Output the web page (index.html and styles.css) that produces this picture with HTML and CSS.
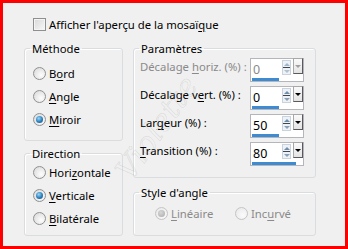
FILE: index.html
```html
<!DOCTYPE html>
<html lang="fr">
<head>
  <meta charset="UTF-8" />
  <title>Mosaïque</title>
  <link rel="stylesheet" href="styles.css">
</head>
<body>

  <div class="dialog">

    <!-- Aperçu -->
    <div class="check-row">
      <span class="checkbox"></span>
      <span>Afficher l'aperçu de la mosaï<u>q</u>ue</span>
    </div>

    <div class="columns">

      <!-- Colonne gauche -->
      <div class="col">
        <fieldset class="group method">
          <legend>Méthode</legend>
          <div class="radio"><span class="dot"></span><span>B<u>o</u>rd</span></div>
          <div class="radio"><span class="dot"></span><span><u>A</u>ngle</span></div>
          <div class="radio"><span class="dot on"></span><span><u>M</u>iroir</span></div>
        </fieldset>

        <fieldset class="group direction">
          <legend>Direction</legend>
          <div class="radio"><span class="dot"></span><span>Hori<u>z</u>ontale</span></div>
          <div class="radio"><span class="dot on"></span><span><u>V</u>erticale</span></div>
          <div class="radio"><span class="dot"></span><span><u>B</u>ilatérale</span></div>
        </fieldset>
      </div>

      <!-- Colonne droite -->
      <div class="col">
        <fieldset class="group params">
          <legend>Paramètres</legend>

          <div class="param disabled">
            <span class="param-label">Décalage <u>h</u>oriz. (%) :</span>
            <div class="spin">
              <div class="spin-top">
                <span class="spin-value">0</span>
                <span class="spin-arrows"><i class="up"></i><i class="down"></i></span>
                <span class="spin-drop"></span>
              </div>
              <div class="spin-bar" style="width:27px"></div>
            </div>
          </div>

          <div class="param">
            <span class="param-label">Décalage v<u>e</u>rt. (%) :</span>
            <div class="spin">
              <div class="spin-top">
                <span class="spin-value">0</span>
                <span class="spin-arrows"><i class="up"></i><i class="down"></i></span>
                <span class="spin-drop"></span>
              </div>
              <div class="spin-bar" style="width:27px"></div>
            </div>
          </div>

          <div class="param">
            <span class="param-label">Lar<u>g</u>eur (%) :</span>
            <div class="spin">
              <div class="spin-top">
                <span class="spin-value">50</span>
                <span class="spin-arrows"><i class="up"></i><i class="down"></i></span>
                <span class="spin-drop"></span>
              </div>
              <div class="spin-bar" style="width:27px"></div>
            </div>
          </div>

          <div class="param">
            <span class="param-label"><u>T</u>ransition (%) :</span>
            <div class="spin">
              <div class="spin-top">
                <span class="spin-value">80</span>
                <span class="spin-arrows"><i class="up"></i><i class="down"></i></span>
                <span class="spin-drop"></span>
              </div>
              <div class="spin-bar" style="width:44px"></div>
            </div>
          </div>
        </fieldset>

        <fieldset class="group angle">
          <legend>Style d'angle</legend>
          <div class="angle-row">
            <div class="radio disabled"><span class="dot on"></span><span><u>L</u>inéaire</span></div>
            <div class="radio disabled"><span class="dot"></span><span>Inc<u>u</u>rvé</span></div>
          </div>
        </fieldset>
      </div>

    </div>

    <div class="watermark">Violette</div>
  </div>

</body>
</html>
```

FILE: styles.css
```css
* {
  box-sizing: border-box;
}

body {
  margin: 0;
  font-family: "Noto Sans", sans-serif;
  font-size: 11.3px;
  line-height: 15px;
  color: #000;
}

u {
  text-decoration-thickness: 1px;
  text-underline-offset: 2px;
}

.dialog {
  position: relative;
  width: 348px;
  height: 249px;
  background: #f0f0f0;
  border: 3px solid #f00;
  padding: 15px 29px 0 21px;
  overflow: hidden;
}

/* case à cocher */
.check-row {
  display: flex;
  align-items: center;
  gap: 3px;
  height: 13px;
  margin-left: 9px;
}

.checkbox {
  width: 13px;
  height: 13px;
  border: 1px solid #8e8f8f;
  background: linear-gradient(135deg, #d8d8d8, #f8f8f8);
  box-shadow: inset 0 0 0 1px #f4f4f4;
}

.columns {
  display: grid;
  grid-template-columns: 99px 183px;
  column-gap: 10px;
  margin-top: 10px;
}

.col {
  display: flex;
  flex-direction: column;
}

/* group boxes */
.group {
  margin: 0;
  padding: 0;
  min-width: 0;
  border: 1px solid #d9dde0;
  border-radius: 3px;
  box-shadow: inset 1px 1px 0 #fff;
}

.group legend {
  padding: 0 2px;
  margin-left: 5px;
}

.method {
  height: 100px;
  padding-top: 6px;
}

.direction {
  height: 90px;
  margin-top: 5px;
}

.method .radio,
.direction .radio {
  margin-left: 8px;
}

.params {
  height: 137px;
  padding-top: 2px;
  display: flex;
  flex-direction: column;
  gap: 4px;
}

.angle {
  height: 51px;
  margin-top: 7px;
  padding-top: 2px;
}

/* boutons radio */
.radio {
  display: flex;
  align-items: center;
  gap: 3px;
  height: 23px;
}

.dot {
  position: relative;
  width: 13px;
  height: 13px;
  border-radius: 50%;
  border: 1px solid #8f9091;
  background: radial-gradient(circle at 65% 65%, #fdfdfd, #d6d6d6);
}

.dot.on::after {
  content: "";
  position: absolute;
  left: 2px;
  top: 2px;
  width: 7px;
  height: 7px;
  border-radius: 50%;
  background: radial-gradient(circle at 40% 35%, #9ad8f7, #2a7dbb 55%, #114a78);
}

.radio.disabled {
  color: #8a8a8a;
}

.radio.disabled .dot {
  border-color: #c4c4c4;
  background: radial-gradient(circle at 65% 65%, #fbfbfb, #e6e6e6);
}

.radio.disabled .dot.on::after {
  background: radial-gradient(circle at 40% 35%, #d8d8d8, #a8a8a8);
}

.angle-row {
  display: flex;
  padding-left: 21px;
}

.angle-row .radio {
  width: 82px;
}

/* champs numériques */
.param {
  display: flex;
  align-items: flex-start;
  height: 24px;
  margin-left: 6px;
}

.param-label {
  width: 110px;
  margin-top: 1px;
  white-space: nowrap;
}

.param.disabled .param-label,
.param.disabled .spin-value {
  color: #8a8a8a;
}

.spin {
  width: 54px;
  height: 24px;
  background: #fff;
  border: 1px solid #b4b6bb;
  display: flex;
  flex-direction: column;
  justify-content: space-between;
}

.spin-top {
  display: flex;
  height: 16px;
}

.spin-value {
  width: 31px;
  padding: 3px 0 0 2px;
  font-size: 12.5px;
  line-height: 16px;
}

.spin-arrows {
  position: relative;
  width: 9px;
  height: 15px;
  margin: 1px 2px 0 0;
  display: flex;
  flex-direction: column;
  border: 1px solid #c9d3dc;
  background: #eef2f6;
}

.spin-arrows i {
  flex: 1;
  display: flex;
  align-items: center;
  justify-content: center;
}

.spin-arrows .up {
  border-bottom: 1px solid #40464c;
}

.spin-arrows .up::before {
  content: "";
  border-left: 3px solid transparent;
  border-right: 3px solid transparent;
  border-bottom: 3px solid #6d8fae;
}

.spin-arrows .down::before {
  content: "";
  border-left: 3px solid transparent;
  border-right: 3px solid transparent;
  border-top: 3px solid #8aa0b5;
}

.spin-drop {
  width: 10px;
  height: 16px;
  margin-top: -1px;
  margin-right: -1px;
  display: flex;
  align-items: center;
  justify-content: center;
  background: linear-gradient(#fafafa, #e4e4e4);
  border: 1px solid #a8a8a8;
  border-right-color: #5a5a5a;
  border-bottom-color: #5a5a5a;
}

.spin-drop::before {
  content: "";
  border-left: 3px solid transparent;
  border-right: 3px solid transparent;
  border-top: 3px solid #000;
}

.param.disabled .spin-drop::before {
  border-top-color: #a0a0a0;
}

.param.disabled .spin-arrows .up::before,
.param.disabled .spin-arrows .down::before {
  opacity: 0.6;
}

.spin-bar {
  height: 3px;
  margin-left: 1px;
  background: #3f8bd2;
}

/* filigrane */
.watermark {
  position: absolute;
  left: 95px;
  top: 110px;
  transform: rotate(-55deg);
  font-family: "DejaVu Serif", serif;
  font-style: italic;
  font-size: 30px;
  line-height: 30px;
  color: transparent;
  -webkit-text-stroke: 1px rgba(0, 0, 0, 0.08);
  pointer-events: none;
}
```
